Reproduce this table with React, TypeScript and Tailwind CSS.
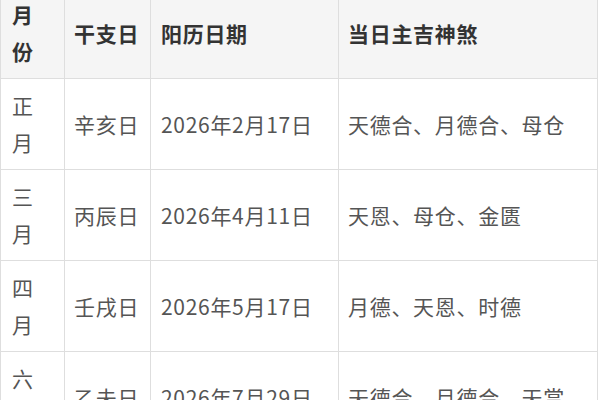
const ROWS = [
  { month: "正月", ganzhi: "辛亥日", date: "2026年2月17日", gods: "天德合、月德合、母仓" },
  { month: "三月", ganzhi: "丙辰日", date: "2026年4月11日", gods: "天恩、母仓、金匮" },
  { month: "四月", ganzhi: "壬戌日", date: "2026年5月17日", gods: "月德、天恩、时德" },
  { month: "六月", ganzhi: "乙未日", date: "2026年7月29日", gods: "天德合、月德合、天赏" },
];

const FONT = { fontFamily: '"Noto Sans CJK SC", "Noto Sans", sans-serif' };

export default function App() {
  return (
    <div className="h-[400px] w-[600px] overflow-hidden bg-white" style={FONT}>
      <table className="-mt-[13px] w-[597px] table-fixed border-collapse text-[21px] leading-[37px] tracking-[0.7px]">
        <colgroup>
          <col className="w-[64px]" />
          <col className="w-[86px]" />
          <col className="w-[188px]" />
          <col className="w-[259px]" />
        </colgroup>
        <thead>
          <tr className="bg-[#f5f5f5] text-[#333]">
            <th className="border border-[#dedede] px-[11px] py-2 text-left font-bold">
              <div className="w-[1em] break-all">月份</div>
            </th>
            <th className="border border-[#dedede] px-[9px] py-2 text-left font-bold">干支日</th>
            <th className="border border-[#dedede] px-[10px] py-2 text-left font-bold">阳历日期</th>
            <th className="border border-[#dedede] px-[9px] py-2 text-left font-bold">当日主吉神煞</th>
          </tr>
        </thead>
        <tbody className="text-[#555]">
          {ROWS.map((r) => (
            <tr key={r.month}>
              <td className="border border-[#dedede] px-[11px] py-2">
                <div className="w-[1em] break-all">{r.month}</div>
              </td>
              <td className="border border-[#dedede] px-[9px] py-2">{r.ganzhi}</td>
              <td className="border border-[#dedede] px-[10px] py-2 whitespace-nowrap">{r.date}</td>
              <td className="border border-[#dedede] px-[9px] py-2 whitespace-nowrap">{r.gods}</td>
            </tr>
          ))}
        </tbody>
      </table>
    </div>
  );
}
